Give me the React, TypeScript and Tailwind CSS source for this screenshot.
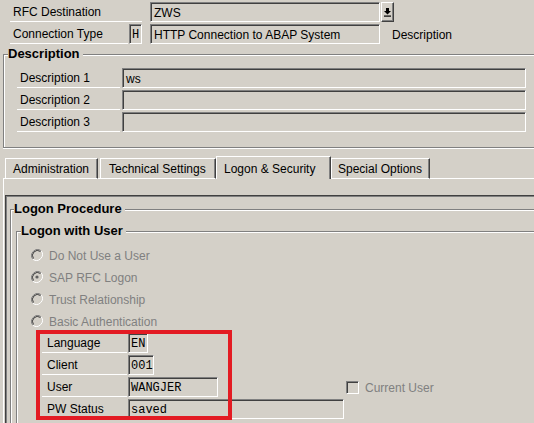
import React from "react";

const sunken =
  "h-[20px] pt-[1px] flex items-center whitespace-nowrap overflow-hidden border-t border-l border-b border-r border-t-[#808080] border-l-[#808080] border-b-white border-r-white shadow-[inset_1px_1px_0_#404040]";

function Field({ className = "", children }: { className?: string; children?: React.ReactNode }) {
  return <div className={`${sunken} ${className}`}>{children}</div>;
}

function Label({ className = "", children }: { className?: string; children?: React.ReactNode }) {
  return (
    <div className={`h-[20px] pt-[1px] flex items-center whitespace-nowrap border-b border-white ${className}`}>{children}</div>
  );
}

function Group({
  title,
  className = "",
  leftW,
  children,
}: {
  title: string;
  className?: string;
  leftW: string;
  children?: React.ReactNode;
}) {
  return (
    <div className={className}>
      <div className="flex h-[14px]">
        <div
          className={`${leftW} h-[7px] self-end border-l border-t border-[#808080] shadow-[inset_1px_1px_0_#fff]`}
        />
        <span className="font-bold text-[13px] leading-[14px] whitespace-nowrap">{title}</span>
        <div className="flex-1 ml-[3px] h-[7px] self-end border-t border-[#808080] shadow-[inset_0_1px_0_#fff]" />
      </div>
      <div className="border-l border-b border-[#808080] shadow-[inset_1px_0_0_#fff,0_1px_0_#fff]">{children}</div>
    </div>
  );
}

function Tab({ w, pl, label }: { w: string; pl: string; label: string }) {
  return (
    <div
      className={`${w} ${pl} h-[21px] pt-[1px] flex items-center whitespace-nowrap border-t border-l border-r border-b border-t-white border-l-white border-r-[#404040] border-b-white shadow-[inset_-1px_0_0_#808080]`}
    >
      {label}
    </div>
  );
}

function Radio({ label, checked = false }: { label: string; checked?: boolean }) {
  return (
    <div className="h-[22px] flex items-center pl-[14px]">
      <svg width="12" height="12" viewBox="0 0 12 12" className="shrink-0">
        <path d="M10.2 1.8 A6 6 0 0 0 1.8 10.2" fill="none" stroke="#808080" strokeWidth="1" />
        <path d="M9.5 2.5 A5 5 0 0 0 2.5 9.5" fill="none" stroke="#404040" strokeWidth="1" />
        <path d="M1.8 10.2 A6 6 0 0 0 10.2 1.8" fill="none" stroke="#ffffff" strokeWidth="1" />
        {checked && <circle cx="6" cy="6" r="1.6" fill="#606060" />}
      </svg>
      <span className="ml-[6px] pt-[1px] text-[#808080] whitespace-nowrap">{label}</span>
    </div>
  );
}

export default function App() {
  const mono = "font-['Liberation_Mono','Courier_New',monospace] text-[12px]";
  return (
    <div className="relative w-[534px] h-[423px] overflow-hidden bg-[#d4d0c8] text-black text-[12px] font-['Liberation_Sans',Arial,sans-serif] pt-[2px]">
      {/* Row 1 */}
      <div className="flex items-start">
        <Label className="ml-[10px] w-[132px] pl-[3px]">RFC Destination</Label>
        <Field className="ml-[8px] w-[230px] pl-[3px]">ZWS</Field>
        <div className="ml-[1px] w-[13px] h-[20px] flex items-center justify-center border-t border-l border-r border-b border-t-white border-l-white border-r-[#404040] border-b-[#404040] shadow-[inset_-1px_-1px_0_#808080]">
          <svg width="7" height="9" viewBox="0 0 7 9">
            <rect x="2" y="0" width="3" height="3" fill="#000" />
            <polygon points="0,3 7,3 3.5,6.5" fill="#000" />
            <rect x="0" y="7.5" width="7" height="1.2" fill="#000" />
          </svg>
        </div>
      </div>
      {/* Row 2 */}
      <div className="flex items-start mt-[2px]">
        <Label className="ml-[10px] w-[118px] pl-[3px]">Connection Type</Label>
        <Field className={`ml-[1px] w-[13px] justify-center ${mono}`}>H</Field>
        <Field className="ml-[8px] w-[230px] pl-[3px]">HTTP Connection to ABAP System</Field>
        <div className="ml-[12px] h-[20px] pt-[1px] flex items-center">Description</div>
      </div>

      {/* Description group */}
      <Group title="Description" leftW="w-[5px]" className="ml-[3px] mt-[3px]">
        <div className="pt-[7px] pb-[15px] flex flex-col gap-[2px]">
          {["Description 1", "Description 2", "Description 3"].map((l, i) => (
            <div key={l} className="flex items-start ml-[13px]">
              <Label className="w-[103px] pl-[3px]">{l}</Label>
              <Field className="ml-[2px] w-[404px] pl-[3px]">{i === 0 ? "ws" : ""}</Field>
            </div>
          ))}
        </div>
      </Group>

      {/* Tab strip */}
      <div className="flex items-end h-[23px] mt-[8px] ml-[3px]">
        <div className="w-[2px] border-b border-white" />
        <Tab w="w-[93px]" pl="pl-[7px]" label="Administration" />
        <div className="w-[2px] border-b border-white" />
        <Tab w="w-[116px]" pl="pl-[8px]" label="Technical Settings" />
        <div className="w-[115px] h-[23px] pl-[7px] pt-[2px] flex items-center whitespace-nowrap border-t border-l border-r border-t-white border-l-white border-r-[#404040] shadow-[inset_-1px_0_0_#808080]">
          Logon &amp; Security
        </div>
        <Tab w="w-[99px]" pl="pl-[6px]" label="Special Options" />
        <div className="flex-1 border-b border-white" />
      </div>

      {/* Tab panel */}
      <div className="ml-[3px] border-l border-white pt-[16px] h-[300px]">
        <div className="ml-[1px] h-[260px] border-t border-l border-[#404040] shadow-[inset_1px_1px_0_#808080] pt-[6px]">
          <Group title="Logon Procedure" leftW="w-[4px]" className="ml-[4px]">
            <div className="pt-[8px]">
              <Group title="Logon with User" leftW="w-[5px]" className="ml-[5px]">
                <div className="pt-[6px] pb-[20px]">
                  <Radio label="Do Not Use a User" />
                  <Radio label="SAP RFC Logon" checked />
                  <Radio label="Trust Relationship" />
                  <Radio label="Basic Authentication" />
                  <div className="mt-[1px] flex flex-col gap-[2px]">
                    <div className="flex items-start ml-[25px]">
                      <Label className="w-[85px] pl-[5px]">Language</Label>
                      <Field className={`ml-[1px] w-[20px] pl-[2px] ${mono}`}>EN</Field>
                    </div>
                    <div className="flex items-start ml-[25px]">
                      <Label className="w-[85px] pl-[5px]">Client</Label>
                      <Field className={`ml-[1px] w-[26px] pl-[2px] ${mono}`}>001</Field>
                    </div>
                    <div className="flex items-center ml-[25px]">
                      <Label className="w-[85px] pl-[5px]">User</Label>
                      <Field className={`ml-[1px] w-[90px] pl-[2px] ${mono}`}>WANGJER</Field>
                      <div className="ml-[128px] w-[13px] h-[13px] border-t border-l border-b border-r border-t-[#808080] border-l-[#808080] border-b-white border-r-white shadow-[inset_1px_1px_0_#404040]" />
                      <span className="ml-[6px] pt-[1px] text-[#808080]">Current User</span>
                    </div>
                    <div className="flex items-start ml-[25px]">
                      <Label className="w-[85px] pl-[5px]">PW Status</Label>
                      <Field className={`ml-[1px] w-[216px] pl-[2px] ${mono}`}>saved</Field>
                    </div>
                  </div>
                </div>
              </Group>
            </div>
          </Group>
        </div>
      </div>

      {/* Red annotation box */}
      <div className="absolute left-[36px] top-[330px] w-[196px] h-[90px] border-4 border-[#e31b23]" />
    </div>
  );
}
